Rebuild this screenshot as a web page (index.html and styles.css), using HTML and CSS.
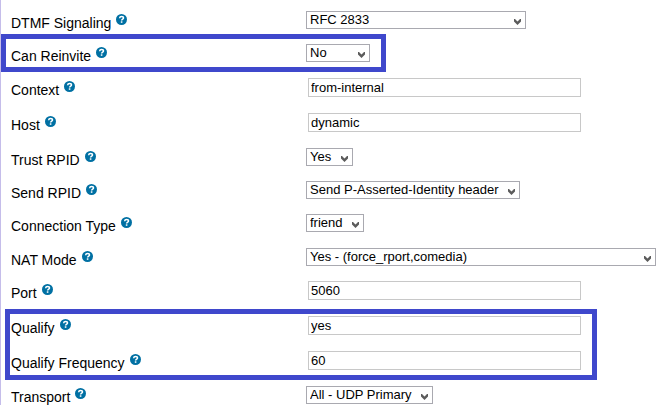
FILE: index.html
```html
<!DOCTYPE html>
<html lang="en">
<head>
<meta charset="utf-8">
<title>Device Options</title>
<link rel="stylesheet" href="styles.css">
</head>
<body>
<svg class="defs" aria-hidden="true">
  <symbol id="help" viewBox="0 0 11 11">
    <circle cx="5.5" cy="5.5" r="5.5" fill="#0070a3"/>
    <path d="M3.6 4.2C3.7 2.9 4.5 2.4 5.6 2.4C6.8 2.4 7.5 3 7.5 3.9C7.5 5.1 5.7 5.1 5.6 6.5" fill="none" stroke="#fff" stroke-width="1.5"/>
    <rect x="4.8" y="7.3" width="1.6" height="1.5" fill="#fff"/>
  </symbol>
  <symbol id="chevron" viewBox="0 0 7 6">
    <path d="M0 0H1L3.5 2.5L6 0H7V2.5L3.5 6L0 2.5Z" fill="#5c5c5c"/>
  </symbol>
</svg>
<form class="options">
  <div class="group">
    <div class="row">
      <div class="name"><label for="dtmf">DTMF Signaling</label><svg class="help"><use href="#help"/></svg></div>
      <div class="select medium"><select id="dtmf"><option>RFC 2833</option></select><svg class="chevron"><use href="#chevron"/></svg></div>
    </div>
    <div class="marked marked-short">
      <div class="row">
        <div class="name"><label for="reinvite">Can Reinvite</label><svg class="help"><use href="#help"/></svg></div>
        <div class="select small"><select id="reinvite"><option>No</option><option>Yes</option></select><svg class="chevron"><use href="#chevron"/></svg></div>
      </div>
    </div>
  </div>
  <div class="group">
    <div class="row row-text">
      <div class="name"><label for="context">Context</label><svg class="help"><use href="#help"/></svg></div>
      <input type="text" id="context" value="from-internal">
    </div>
    <div class="row row-text">
      <div class="name"><label for="host">Host</label><svg class="help"><use href="#help"/></svg></div>
      <input type="text" id="host" value="dynamic">
    </div>
    <div class="row">
      <div class="name"><label for="trust">Trust RPID</label><svg class="help"><use href="#help"/></svg></div>
      <div class="select"><select id="trust"><option>Yes</option><option>No</option></select><svg class="chevron"><use href="#chevron"/></svg></div>
    </div>
    <div class="row">
      <div class="name"><label for="send">Send RPID</label><svg class="help"><use href="#help"/></svg></div>
      <div class="select"><select id="send"><option>Send P-Asserted-Identity header</option></select><svg class="chevron"><use href="#chevron"/></svg></div>
    </div>
    <div class="row">
      <div class="name"><label for="type">Connection Type</label><svg class="help"><use href="#help"/></svg></div>
      <div class="select"><select id="type"><option>friend</option><option>peer</option></select><svg class="chevron"><use href="#chevron"/></svg></div>
    </div>
  </div>
  <div class="group">
    <div class="row">
      <div class="name"><label for="nat">NAT Mode</label><svg class="help"><use href="#help"/></svg></div>
      <div class="select wide"><select id="nat"><option>Yes - (force_rport,comedia)</option></select><svg class="chevron"><use href="#chevron"/></svg></div>
    </div>
    <div class="row row-text">
      <div class="name"><label for="port">Port</label><svg class="help"><use href="#help"/></svg></div>
      <input type="text" id="port" value="5060">
    </div>
    <div class="marked marked-long">
      <div class="row row-text">
        <div class="name"><label for="qualify">Qualify</label><svg class="help"><use href="#help"/></svg></div>
        <input type="text" id="qualify" value="yes">
      </div>
      <div class="row row-text">
        <div class="name"><label for="frequency">Qualify Frequency</label><svg class="help"><use href="#help"/></svg></div>
        <input type="text" id="frequency" value="60">
      </div>
    </div>
    <div class="row row-last">
      <div class="name"><label for="transport">Transport</label><svg class="help"><use href="#help"/></svg></div>
      <div class="select"><select id="transport"><option>All - UDP Primary</option></select><svg class="chevron"><use href="#chevron"/></svg></div>
    </div>
  </div>
</form>
</body>
</html>
```
FILE: styles.css
```css
*,
*::after {
  box-sizing: border-box;
}

body {
  margin: 0;
  background: #fff;
  color: #000;
  font-family: "Liberation Sans", Arial, sans-serif;
  font-size: 14px;
}

.defs {
  position: absolute;
  width: 0;
  height: 0;
}

.options {
  display: flex;
  flex-direction: column;
  gap: 1px;
  padding: 11px 7px 0 10px;
  border-left: 1px solid #c5bdea;
}

.row {
  display: grid;
  grid-template-columns: 295px minmax(0, 1fr);
  align-items: start;
  height: 33px;
}

.row-text {
  height: 35px;
}

.row-last {
  height: 19px;
}

.name {
  display: flex;
  align-items: flex-start;
  gap: 5px;
  padding-top: 3px;
}

.row-last .name {
  padding-top: 2px;
}

.name label {
  padding-top: 2px;
  line-height: 15px;
}

.help {
  width: 11px;
  height: 11px;
}

.select {
  position: relative;
  justify-self: start;
  max-width: 100%;
}

.small {
  width: 64px;
}

.medium {
  width: 220px;
}

.wide {
  width: 100%;
}

select,
input {
  display: block;
  margin: 0;
  border-radius: 0;
  background: #fff;
  color: #000;
  font-family: inherit;
  font-size: 13px;
  line-height: 16px;
}

select {
  appearance: none;
  width: 100%;
  height: 18px;
  padding: 0 20px 0 3px;
  border: 1px solid #a9a9b0;
}

.chevron {
  position: absolute;
  right: 5px;
  bottom: 4px;
  width: 7px;
  height: 6px;
  pointer-events: none;
}

input {
  width: 273px;
  max-width: 100%;
  height: 19px;
  margin-left: 2px;
  padding: 0 2px;
  border: 1px solid #c8c8c8;
}

.marked {
  position: relative;
}

.marked::after {
  content: "";
  position: absolute;
  border: 5px solid #3f48cc;
  pointer-events: none;
}

.marked-short::after {
  top: -10px;
  left: -10px;
  width: 385px;
  height: 38px;
}

.marked-long::after {
  top: -7px;
  left: -6px;
  width: 592px;
  height: 71px;
}
```
